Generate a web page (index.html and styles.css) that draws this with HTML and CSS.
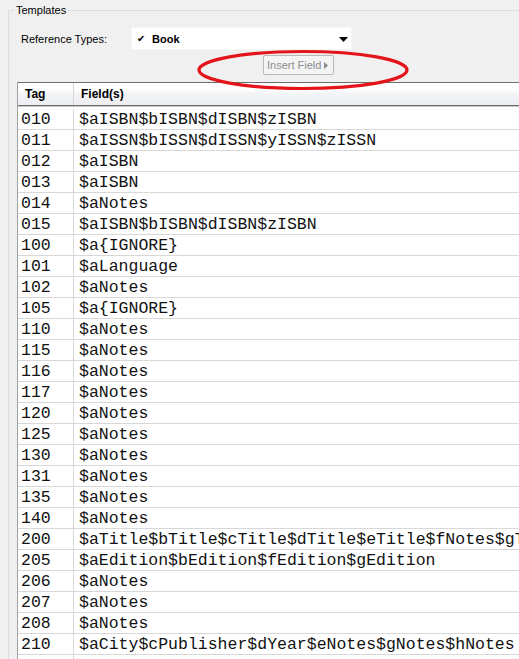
FILE: index.html
```html
<!DOCTYPE html>
<html>
<head>
<meta charset="utf-8">
<link rel="stylesheet" href="styles.css">
</head>
<body>
<fieldset class="group">
  <legend class="group-title">Templates</legend>
  <div class="ref-row">
    <span class="ref-label">Reference Types:</span>
    <div class="select">
      <span class="check">✔</span>
      <span class="select-value">Book</span>
      <svg class="select-arrow" width="9" height="5" viewBox="0 0 9 5"><path d="M0 0H9L4.5 5Z" fill="#000"/></svg>
    </div>
  </div>
  <div class="insert-row">
    <button class="insert-btn">Insert Field<svg class="insert-arrow" width="4" height="7" viewBox="0 0 4 7"><path d="M0 0L4 3.5L0 7Z" fill="#8a8a8a"/></svg></button>
  </div>
  <svg class="highlight" width="220" height="44" viewBox="0 0 220 44"><ellipse cx="106" cy="21" rx="104" ry="18.5" fill="none" stroke="#e4141b" stroke-width="3.2"/></svg>
  <div class="grid">
    <div class="head">
      <div class="c-tag">Tag</div>
      <div class="c-field">Field(s)</div>
    </div>
    <div class="body">
      <div class="r"><div class="c-tag">010</div><div class="c-field">$aISBN$bISBN$dISBN$zISBN</div></div>
      <div class="r"><div class="c-tag">011</div><div class="c-field">$aISSN$bISSN$dISSN$yISSN$zISSN</div></div>
      <div class="r"><div class="c-tag">012</div><div class="c-field">$aISBN</div></div>
      <div class="r"><div class="c-tag">013</div><div class="c-field">$aISBN</div></div>
      <div class="r"><div class="c-tag">014</div><div class="c-field">$aNotes</div></div>
      <div class="r"><div class="c-tag">015</div><div class="c-field">$aISBN$bISBN$dISBN$zISBN</div></div>
      <div class="r"><div class="c-tag">100</div><div class="c-field">$a{IGNORE}</div></div>
      <div class="r"><div class="c-tag">101</div><div class="c-field">$aLanguage</div></div>
      <div class="r"><div class="c-tag">102</div><div class="c-field">$aNotes</div></div>
      <div class="r"><div class="c-tag">105</div><div class="c-field">$a{IGNORE}</div></div>
      <div class="r"><div class="c-tag">110</div><div class="c-field">$aNotes</div></div>
      <div class="r"><div class="c-tag">115</div><div class="c-field">$aNotes</div></div>
      <div class="r"><div class="c-tag">116</div><div class="c-field">$aNotes</div></div>
      <div class="r"><div class="c-tag">117</div><div class="c-field">$aNotes</div></div>
      <div class="r"><div class="c-tag">120</div><div class="c-field">$aNotes</div></div>
      <div class="r"><div class="c-tag">125</div><div class="c-field">$aNotes</div></div>
      <div class="r"><div class="c-tag">130</div><div class="c-field">$aNotes</div></div>
      <div class="r"><div class="c-tag">131</div><div class="c-field">$aNotes</div></div>
      <div class="r"><div class="c-tag">135</div><div class="c-field">$aNotes</div></div>
      <div class="r"><div class="c-tag">140</div><div class="c-field">$aNotes</div></div>
      <div class="r"><div class="c-tag">200</div><div class="c-field">$aTitle$bTitle$cTitle$dTitle$eTitle$fNotes$gTitle</div></div>
      <div class="r"><div class="c-tag">205</div><div class="c-field">$aEdition$bEdition$fEdition$gEdition</div></div>
      <div class="r"><div class="c-tag">206</div><div class="c-field">$aNotes</div></div>
      <div class="r"><div class="c-tag">207</div><div class="c-field">$aNotes</div></div>
      <div class="r"><div class="c-tag">208</div><div class="c-field">$aNotes</div></div>
      <div class="r"><div class="c-tag">210</div><div class="c-field">$aCity$cPublisher$dYear$eNotes$gNotes$hNotes</div></div>
      <div class="r"><div class="c-tag"></div><div class="c-field"></div></div>
    </div>
  </div>
</fieldset>
</body>
</html>
```
FILE: styles.css
```css
html, body {
  margin: 0;
  padding: 0;
  background: #f0f0f0;
  overflow: hidden;
  width: 519px;
  height: 659px;
}

body {
  font-family: "Liberation Sans", Arial, sans-serif;
  font-size: 11px;
  color: #000;
}

.group {
  position: relative;
  margin: 3px 0 0 8px;
  padding: 0 0 0 8px;
  width: 600px;
  height: 700px;
  border: 1px solid #d5dfe5;
  border-right: none;
  border-bottom: none;
  box-sizing: border-box;
  min-width: 0;
  overflow: hidden;
}

.group-title {
  margin-left: -3px;
  padding: 0 2px;
  line-height: 14px;
  font-size: 11px;
}

.ref-row {
  display: flex;
  align-items: center;
  margin-top: 10px;
  height: 23px;
}

.ref-label {
  width: 114px;
  padding-left: 4px;
  box-sizing: border-box;
}

.select {
  display: flex;
  align-items: center;
  width: 221px;
  height: 23px;
  background: #fff;
  border: 1px solid #f6f6f6;
  box-sizing: border-box;
}

.check {
  font-size: 10px;
  margin-left: 5px;
  width: 15px;
}

.select-value {
  font-weight: bold;
  font-size: 11px;
}

.select-arrow {
  margin-left: auto;
  margin-right: 3px;
  margin-top: 2px;
}

.insert-row {
  display: flex;
  margin-top: 5px;
  padding-left: 246px;
  height: 20px;
}

.insert-btn {
  display: flex;
  align-items: center;
  gap: 3px;
  width: 71px;
  height: 20px;
  padding: 0 0 0 3px;
  border: 1px solid #b8b8b8;
  border-radius: 2px;
  background: #f4f4f4;
  color: #8d8d8d;
  font-family: "Liberation Sans", Arial, sans-serif;
  font-size: 11px;
  box-sizing: border-box;
}

.highlight {
  position: absolute;
  left: 188px;
  top: 32px;
}

.grid {
  margin-top: 7px;
  background: #fff;
  border-left: 1px solid #a0a0a0;
}

.head {
  display: flex;
  height: 22px;
  border-top: 1px solid #6e6e6e;
  border-bottom: 1px solid #6e6e6e;
  background: linear-gradient(#ffffff 0%, #ffffff 30%, #f3f5f7 45%, #eceef1 100%);
  box-shadow: 0 1px 0 #c8c8c8;
  font-weight: bold;
  font-size: 12px;
  align-items: center;
}

.head .c-tag {
  width: 56px;
  padding-left: 7px;
  box-sizing: border-box;
  border-right: 1px solid #d5d5d5;
  height: 100%;
  display: flex;
  align-items: center;
}

.head .c-field {
  padding-left: 7px;
}

.body {
  padding-top: 3px;
  font-family: "Liberation Mono", "Courier New", monospace;
  font-size: 16.5px;
  color: #111;
}

.r {
  display: flex;
  height: 21px;
  border-bottom: 1px solid #d8d8d8;
  box-sizing: border-box;
  align-items: center;
  white-space: nowrap;
}

.r .c-tag {
  width: 56px;
  padding-left: 3px;
  box-sizing: border-box;
  border-right: 1px solid #d8d8d8;
  height: 100%;
  display: flex;
  align-items: center;
}

.r .c-field {
  padding-left: 5px;
}
```
